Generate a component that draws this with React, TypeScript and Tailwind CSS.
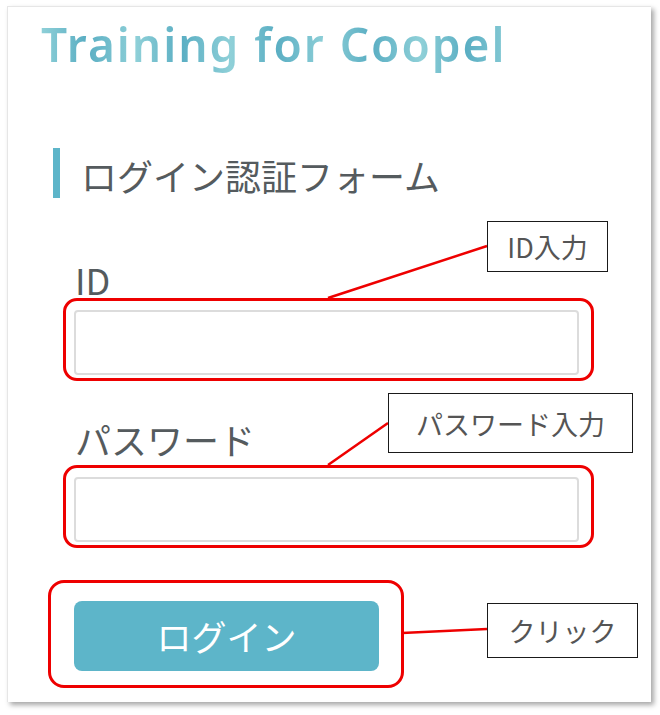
import React from "react";

const jp = { fontFamily: '"Noto Sans CJK JP", "Noto Sans", sans-serif' };

function Callout({ text, className }: { text: string; className: string }) {
  return (
    <div
      className={`absolute flex items-center justify-center bg-white border-[1.5px] border-[#1a1a1a] text-[27px] leading-none text-[#555] ${className}`}
      style={jp}
    >
      {text}
    </div>
  );
}

export default function App() {
  return (
    <div className="relative w-[660px] h-[715px] bg-white overflow-hidden">
      <div className="ml-[7px] pt-[6px]">
        <div className="w-[644px] h-[696px] bg-white border-l border-t border-[#e6e6e6] shadow-[3px_3px_5px_rgba(0,0,0,0.35)] flex flex-col pt-[8px]">
          <div
            className="ml-[33px] text-[46px] leading-[1.3] font-semibold tracking-[2px] bg-[repeating-linear-gradient(90deg,#8fd0d8_0px,#5aaec3_45px,#8fd0d8_95px)] bg-clip-text text-transparent w-fit"
            style={{ fontFamily: '"Noto Sans", sans-serif' }}
          >
            Training for Coopel
          </div>

          <div className="ml-[45px] mt-[73px] flex items-center gap-[21px]">
            <div className="w-[7px] h-[50px] bg-[#5db5c9]" />
            <div className="text-[36px] leading-none text-[#555b5e] mt-[4px]" style={jp}>
              ログイン認証フォーム
            </div>
          </div>

          <div className="ml-[67px] mt-[63px] text-[36px] leading-none text-[#555b5e]" style={jp}>
            ID
          </div>
          <div className="ml-[55px] mt-[1px] w-[531px] border-[3px] border-[#ee0000] rounded-[14px] pl-[8px] pr-[12px] pt-[9px] pb-[3px]">
            <div className="h-[65px] border-2 border-[#dcdcdc] rounded-[4px] bg-white" />
          </div>

          <div className="ml-[67px] mt-[40px] text-[36px] leading-none text-[#555b5e]" style={jp}>
            パスワード
          </div>
          <div className="ml-[55px] mt-[8px] w-[531px] border-[3px] border-[#ee0000] rounded-[14px] pl-[8px] pr-[12px] pt-[9px] pb-[3px]">
            <div className="h-[65px] border-2 border-[#dcdcdc] rounded-[4px] bg-white" />
          </div>

          <div className="ml-[40px] mt-[32px] w-[356px] border-[3px] border-[#ee0000] rounded-[16px] pl-[23px] pt-[18px] pb-[14px]">
            <div
              className="w-[305px] h-[70px] rounded-[8px] bg-[#5db5c9] flex items-center justify-center text-white text-[35px] leading-none"
              style={jp}
            >
              ログイン
            </div>
          </div>
        </div>
      </div>

      <svg className="absolute inset-0 pointer-events-none" width="660" height="715">
        <line x1="328" y1="298" x2="487" y2="246" stroke="#ee0000" strokeWidth="2.5" />
        <line x1="328" y1="465" x2="388" y2="423" stroke="#ee0000" strokeWidth="2.5" />
        <line x1="402" y1="633" x2="487" y2="629" stroke="#ee0000" strokeWidth="2.5" />
      </svg>

      <Callout text="ID入力" className="left-[487px] top-[221px] w-[121px] h-[51px]" />
      <Callout text="パスワード入力" className="left-[388px] top-[393px] w-[245px] h-[60px]" />
      <Callout text="クリック" className="left-[487px] top-[603px] w-[151px] h-[55px]" />
    </div>
  );
}
